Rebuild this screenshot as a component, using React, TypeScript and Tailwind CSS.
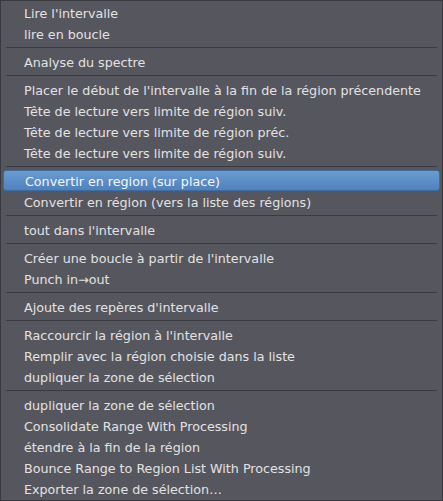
import React from 'react';

type Entry = { label: string; active?: boolean } | 'sep';

const entries: Entry[] = [
  { label: "Lire l'intervalle" },
  { label: 'lire en boucle' },
  'sep',
  { label: 'Analyse du spectre' },
  'sep',
  { label: "Placer le début de l'intervalle à la fin de la région précendente" },
  { label: 'Tête de lecture vers limite de région suiv.' },
  { label: 'Tête de lecture vers limite de région préc.' },
  { label: 'Tête de lecture vers limite de région suiv.' },
  'sep',
  { label: 'Convertir en region (sur place)', active: true },
  { label: 'Convertir en région (vers la liste des régions)' },
  'sep',
  { label: "tout dans l'intervalle" },
  'sep',
  { label: "Créer une boucle à partir de l'intervalle" },
  { label: 'Punch in\u2192out' },
  'sep',
  { label: "Ajoute des repères d'intervalle" },
  'sep',
  { label: "Raccourcir la région à l'intervalle" },
  { label: 'Remplir avec la région choisie dans la liste' },
  { label: 'dupliquer la zone de sélection' },
  'sep',
  { label: 'dupliquer la zone de sélection' },
  { label: 'Consolidate Range With Processing' },
  { label: 'étendre à la fin de la région' },
  { label: 'Bounce Range to Region List With Processing' },
  { label: 'Exporter la zone de sélection\u2026' },
];

export default function App() {
  return (
    <div
      className="w-[443px] h-[501px] bg-[#56575e] border border-[#393a3f] py-px text-[12.7px] text-[#e2e2e4] overflow-hidden"
      style={{ fontFamily: '"DejaVu Sans", Verdana, sans-serif' }}
    >
      {entries.map((e, i) =>
        e === 'sep' ? (
          <div key={i} className="h-[7px] pt-[3px] px-[5px]">
            <div className="h-px bg-[#3a3b40]" />
          </div>
        ) : e.active ? (
          <div key={i} className="h-[21px] px-[2px]">
            <div className="h-full flex items-center pt-[2px] pl-[21px] rounded-[3px] border border-[#3f6b9e] bg-gradient-to-b from-[#6b9cd3] to-[#4f81bb] text-[#f4f6fa] whitespace-nowrap">
              {e.label}
            </div>
          </div>
        ) : (
          <div key={i} className="h-[21px] flex items-center pt-[2px] pl-[23px] whitespace-nowrap">
            {e.label}
          </div>
        )
      )}
    </div>
  );
}
